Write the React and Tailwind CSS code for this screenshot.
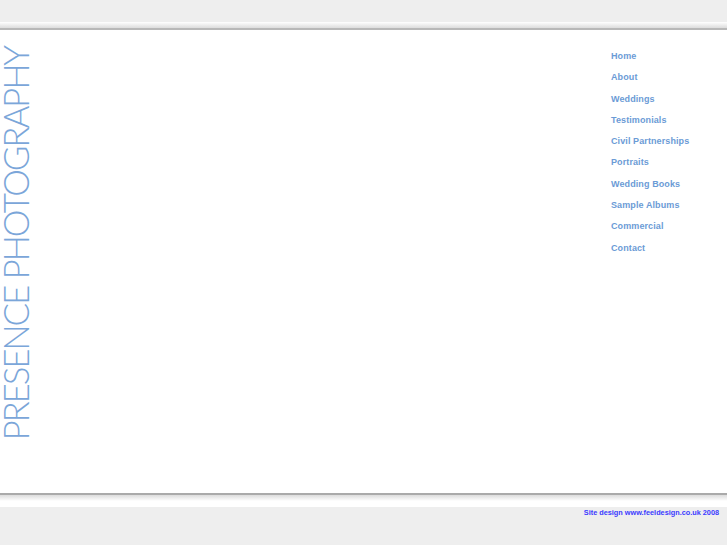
import React from 'react';

const links = [
  'Home',
  'About',
  'Weddings',
  'Testimonials',
  'Civil Partnerships',
  'Portraits',
  'Wedding Books',
  'Sample Albums',
  'Commercial',
  'Contact',
];

export default function App() {
  return (
    <div className="min-h-[545px] bg-[#eeeeee] font-['Liberation_Sans',Arial,sans-serif]">
      {/* top strip */}
      <div className="h-[22px] bg-[#eeeeee]" />
      <div className="h-[6px] bg-gradient-to-b from-white to-[#dcdcdc]" />
      <div className="h-[2px] bg-[#b8b8b8]" />

      {/* main panel */}
      <div className="h-[463px] bg-white flex justify-between">
        <div className="w-[36px] pt-[17px]">
          <span className="block [writing-mode:vertical-rl] rotate-180 font-['Lato',sans-serif] font-light text-[35px] leading-[30px] tracking-[-2.2px] text-[#7ba6d9] whitespace-nowrap">
            PRESENCE PHOTOGRAPHY
          </span>
        </div>

        <nav className="w-[116px] pt-[13px]">
          <ul>
            {links.map((l) => (
              <li key={l} className="h-[21.3px] leading-[21.3px]">
                <a href="#" className="text-[9px] font-bold text-[#6b9bd6] tracking-[0.1px]">
                  {l}
                </a>
              </li>
            ))}
          </ul>
        </nav>
      </div>

      {/* bottom edge */}
      <div className="h-[2px] bg-[#aaaaaa]" />
      <div className="h-[12px] bg-gradient-to-b from-[#dcdcdc] via-white to-white" />

      <footer className="h-[38px] bg-[#eeeeee] pr-[8px] text-right leading-[6px]">
        <span className="text-[7.3px] font-bold text-[#3b3bff]">
          Site design www.feeldesign.co.uk 2008
        </span>
      </footer>
    </div>
  );
}
